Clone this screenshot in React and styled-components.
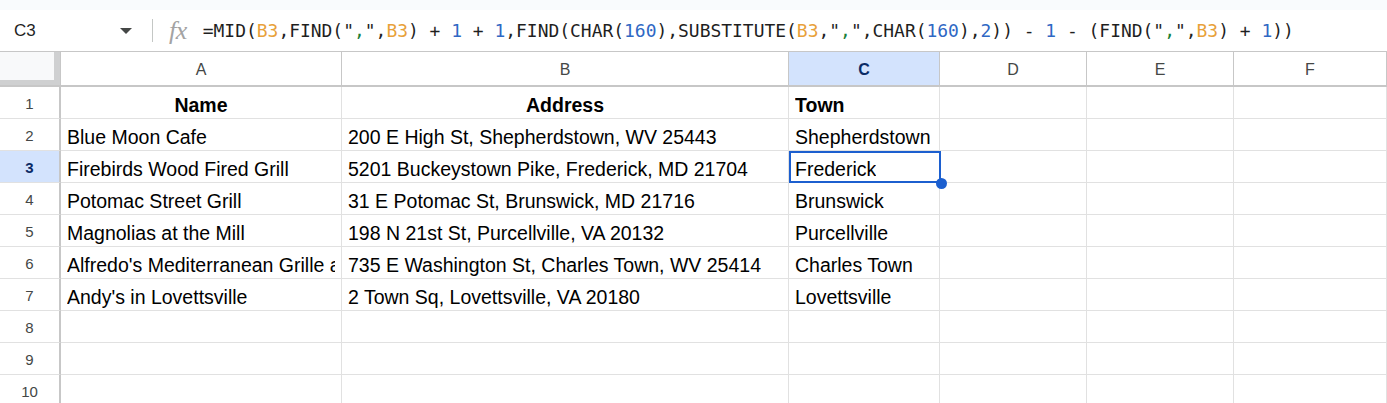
import React from 'react';
import styled, { createGlobalStyle, css } from 'styled-components';

const GlobalStyle = createGlobalStyle`
    html, body {
        margin: 0;
        padding: 0;
        background: #ffffff;
        overflow: hidden;
    }
    body {
        font-family: 'Liberation Sans', Arial, sans-serif;
        color: #1f1f1f;
    }
`;

/* ------------------------------------------------------------------ */
/* top strip + formula bar */

const Page = styled.div`
    width: 1387px;
    height: 403px;
    overflow: hidden;
`;

const TopStrip = styled.div`
    height: 10px;
    background: #f9fbfd;
`;

const FormulaBar = styled.div`
    height: 41px;
    display: flex;
    align-items: center;
    background: #fff;
    border-bottom: 1px solid #c7c7c7;
`;

const NameBox = styled.div`
    width: 152px;
    flex: none;
    display: flex;
    align-items: center;
    justify-content: space-between;
    padding: 0 20px 0 14px;
    box-sizing: border-box;
    font-size: 17px;
    color: #1f1f1f;
`;

const Caret = styled.span`
    width: 0;
    height: 0;
    border-left: 6px solid transparent;
    border-right: 6px solid transparent;
    border-top: 6px solid #444746;
    margin-top: 1px;
`;

const Divider = styled.span`
    width: 1px;
    height: 23px;
    background: #c4c7c5;
    flex: none;
`;

const FxIcon = styled.span`
    font-family: 'Liberation Serif', 'DejaVu Serif', serif;
    font-style: italic;
    font-size: 26px;
    color: #a3a3a3;
    margin: 0 16px 0 16px;
    letter-spacing: -0.5px;
    line-height: 1;
`;

const FormulaText = styled.div`
    font-family: 'DejaVu Sans Mono', 'Liberation Mono', monospace;
    font-size: 17.95px;
    color: #1f1f1f;
    white-space: pre;
`;

const tokenColors = {
    ref: '#e8a13a',
    num: '#2f68c4',
    str: '#188038',
};

const Token = styled.span`
    color: ${({ $kind }) => tokenColors[$kind] || '#1f1f1f'};
`;

const formula = [
    ['=MID(', ''], ['B3', 'ref'], [',FIND("', ''], [',', 'str'], ['",', ''], ['B3', 'ref'],
    [') + ', ''], ['1', 'num'], [' + ', ''], ['1', 'num'], [',FIND(CHAR(', ''], ['160', 'num'],
    ['),SUBSTITUTE(', ''], ['B3', 'ref'], [',"', ''], [',', 'str'], ['",CHAR(', ''], ['160', 'num'],
    ['),', ''], ['2', 'num'], [')) - ', ''], ['1', 'num'], [' - (FIND("', ''], [',', 'str'],
    ['",', ''], ['B3', 'ref'], [') + ', ''], ['1', 'num'], ['))', ''],
];

/* ------------------------------------------------------------------ */
/* grid */

const Sheet = styled.div`
    display: grid;
    grid-template-columns: 61px 281px 447px 151px 147px 147px 1fr;
    grid-auto-rows: 32px;
    grid-template-rows: 35px;
`;

const Corner = styled.div`
    background: #f8f9fa;
    border-right: 1px solid #c7c7c7;
    border-bottom: 2px solid #c7c7c7;
    box-shadow: inset -6px -5px 0 #cfd0d1;
`;

const ColHead = styled.div`
    display: flex;
    align-items: center;
    justify-content: center;
    font-size: 16px;
    color: #444746;
    border-right: 1px solid #c7c7c7;
    border-bottom: 2px solid #c7c7c7;
    padding-top: 3px;
    ${({ $active }) => $active && css`
        background: #d3e3fd;
        color: #0b2b66;
        font-weight: bold;
    `}
`;

const RowHead = styled.div`
    display: flex;
    align-items: center;
    justify-content: center;
    font-size: 15px;
    color: #444746;
    border-right: 2px solid #c7c7c7;
    border-bottom: 1px solid #e1e1e1;
    padding-top: 1px;
    ${({ $active }) => $active && css`
        background: #d3e3fd;
        color: #0b2b66;
        font-weight: bold;
    `}
`;

const Cell = styled.div`
    position: relative;
    display: flex;
    align-items: flex-end;
    justify-content: ${({ $align }) => ($align === 'center' ? 'center' : 'flex-start')};
    padding: 0 6px 2px;
    font-size: 19.5px;
    line-height: 22px;
    font-weight: ${({ $bold }) => ($bold ? 'bold' : 'normal')};
    color: #000;
    white-space: nowrap;
    overflow: hidden;
    border-right: 1px solid #e1e1e1;
    border-bottom: 1px solid #e1e1e1;

    ${({ $selected }) => $selected && css`
        overflow: visible;
        z-index: 2;

        &::before {
            content: '';
            position: absolute;
            top: 0;
            left: 0;
            right: -2px;
            bottom: -1px;
            border: 2px solid #1c5fcf;
        }

        &::after {
            content: '';
            position: absolute;
            right: -8px;
            bottom: -7px;
            width: 11px;
            height: 11px;
            border-radius: 50%;
            background: #1c5fcf;
        }
    `}
`;

const CellText = styled.span`
    overflow: hidden;
    display: block;
`;

const columns = ['A', 'B', 'C', 'D', 'E', 'F'];

const rows = [
    ['Name', 'Address', 'Town'],
    ['Blue Moon Cafe', '200 E High St, Shepherdstown, WV 25443', 'Shepherdstown'],
    ['Firebirds Wood Fired Grill', '5201 Buckeystown Pike, Frederick, MD 21704', 'Frederick'],
    ['Potomac Street Grill', '31 E Potomac St, Brunswick, MD 21716', 'Brunswick'],
    ['Magnolias at the Mill', '198 N 21st St, Purcellville, VA 20132', 'Purcellville'],
    ["Alfredo's Mediterranean Grille and Bar", '735 E Washington St, Charles Town, WV 25414', 'Charles Town'],
    ["Andy's in Lovettsville", '2 Town Sq, Lovettsville, VA 20180', 'Lovettsville'],
    [], [], [],
];

export default function App() {
    return (
        <Page>
            <GlobalStyle />
            <TopStrip />
            <FormulaBar>
                <NameBox>
                    C3
                    <Caret />
                </NameBox>
                <Divider />
                <FxIcon>fx</FxIcon>
                <FormulaText>
                    {formula.map(([text, kind], i) => (
                        <Token key={i} $kind={kind}>{text}</Token>
                    ))}
                </FormulaText>
            </FormulaBar>

            <Sheet>
                <Corner />
                {columns.map((c) => (
                    <ColHead key={c} $active={c === 'C'}>{c}</ColHead>
                ))}

                {rows.map((row, r) => (
                    <React.Fragment key={r}>
                        <RowHead $active={r === 2}>{r + 1}</RowHead>
                        {columns.map((c, ci) => {
                            const header = r === 0;
                            return (
                                <Cell
                                    key={c}
                                    $bold={header}
                                    $align={header && ci < 2 ? 'center' : 'left'}
                                    $selected={r === 2 && ci === 2}
                                >
                                    <CellText>{row[ci] || ''}</CellText>
                                </Cell>
                            );
                        })}
                    </React.Fragment>
                ))}
            </Sheet>
        </Page>
    );
}
